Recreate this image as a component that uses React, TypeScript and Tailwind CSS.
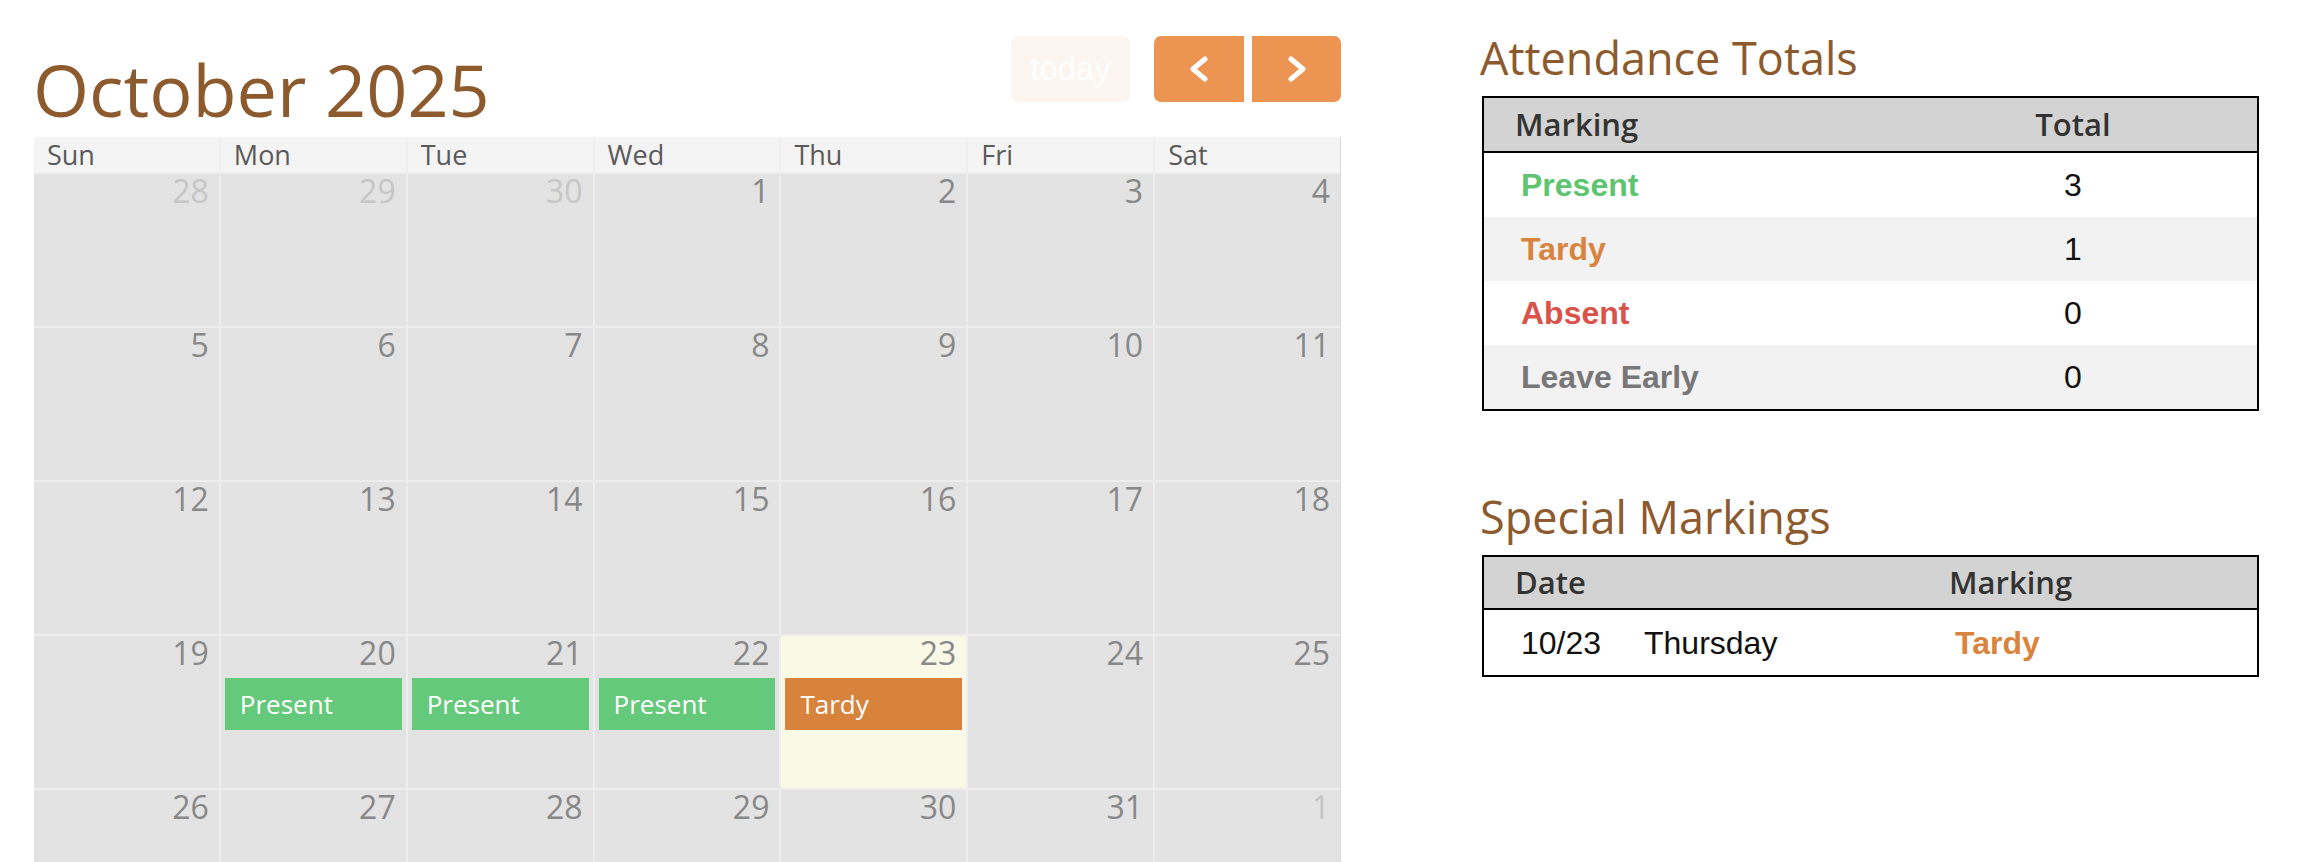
import React from 'react';

type Day = { n: number; other?: boolean; today?: boolean; event?: 'Present' | 'Tardy' };

const weeks: Day[][] = [
    [{ n: 28, other: true }, { n: 29, other: true }, { n: 30, other: true }, { n: 1 }, { n: 2 }, { n: 3 }, { n: 4 }],
    [{ n: 5 }, { n: 6 }, { n: 7 }, { n: 8 }, { n: 9 }, { n: 10 }, { n: 11 }],
    [{ n: 12 }, { n: 13 }, { n: 14 }, { n: 15 }, { n: 16 }, { n: 17 }, { n: 18 }],
    [
        { n: 19 },
        { n: 20, event: 'Present' },
        { n: 21, event: 'Present' },
        { n: 22, event: 'Present' },
        { n: 23, today: true, event: 'Tardy' },
        { n: 24 },
        { n: 25 },
    ],
    [{ n: 26 }, { n: 27 }, { n: 28 }, { n: 29 }, { n: 30 }, { n: 31 }, { n: 1, other: true }],
];

const dayNames = ['Sun', 'Mon', 'Tue', 'Wed', 'Thu', 'Fri', 'Sat'];

const totals = [
    { label: 'Present', color: 'text-[#5ec46f]', total: 3 },
    { label: 'Tardy', color: 'text-[#d9843e]', total: 1 },
    { label: 'Absent', color: 'text-[#d9534a]', total: 0 },
    { label: 'Leave Early', color: 'text-[#777777]', total: 0 },
];

function Chevron({ dir }: { dir: 'left' | 'right' }) {
    return (
        <svg width="20" height="26" viewBox="0 0 20 26" fill="none">
            <path
                d={dir === 'left' ? 'M16 3 L4 13 L16 23' : 'M4 3 L16 13 L4 23'}
                stroke="white"
                strokeWidth="5"
                strokeLinecap="round"
                strokeLinejoin="round"
            />
        </svg>
    );
}

function Calendar() {
    return (
        <div className="w-[1307px] shrink-0">
            {/* toolbar */}
            <div className="flex justify-between items-start h-[101px]">
                <h2 className="font-['Open_Sans',sans-serif] text-[72px] leading-none text-[#8d5a2e] mt-[17px] ml-[-1px]">
                    October 2025
                </h2>
                <div className="flex">
                    <button className="w-[119px] h-[66px] rounded-[7px] bg-[#fdf5ef] text-white font-['Liberation_Sans',sans-serif] text-[33px] mr-[24px]">
                        today
                    </button>
                    <button className="w-[90px] h-[66px] rounded-l-[7px] bg-[#ec9552] flex items-center justify-center mr-[8px]">
                        <Chevron dir="left" />
                    </button>
                    <button className="w-[89px] h-[66px] rounded-r-[7px] bg-[#ec9552] flex items-center justify-center">
                        <Chevron dir="right" />
                    </button>
                </div>
            </div>

            {/* grid */}
            <div className="bg-[#eeeeee] border-r border-[#d9d9d9] font-['Open_Sans',sans-serif]">
                <div className="grid grid-cols-7 gap-x-[2px] h-[35px]">
                    {dayNames.map(d => (
                        <div key={d} className="bg-[#f4f4f4] pl-[13px] text-[27px] leading-[35px] text-[#5a5a5a]">
                            {d}
                        </div>
                    ))}
                </div>
                {weeks.map((week, i) => (
                    <div key={i} className="grid grid-cols-7 gap-x-[2px] h-[154px] pt-[2px]">
                        {week.map((day, j) => (
                            <div key={j} className={day.today ? 'bg-[#faf8e7]' : 'bg-[#e3e3e3]'}>
                                <div
                                    className={`text-right pr-[10px] pt-[1px] text-[32px] leading-[32px] ${day.other ? 'text-[#c6c6c6]' : 'text-[#888888]'}`}
                                >
                                    {day.n}
                                </div>
                                {day.event && (
                                    <div
                                        className={`mx-[4px] mt-[9px] h-[52px] flex items-center pl-[15px] text-[26px] text-white ${day.event === 'Tardy' ? 'bg-[#d8833b]' : 'bg-[#64c97a]'}`}
                                    >
                                        {day.event}
                                    </div>
                                )}
                            </div>
                        ))}
                    </div>
                ))}
            </div>
        </div>
    );
}

function SectionTitle({ children }: { children: React.ReactNode }) {
    return (
        <h3 className="font-['Open_Sans',sans-serif] text-[45px] leading-none text-[#8d5a2e] ml-[-2px]">{children}</h3>
    );
}

export default function App() {
    return (
        <div className="h-[862px] overflow-hidden bg-white flex pl-[34px] pt-[36px]">
            <Calendar />

            <div className="ml-[141px] w-[777px] shrink-0">
                <div className="mt-[-1px]">
                    <SectionTitle>Attendance Totals</SectionTitle>
                </div>
                <div className="mt-[16px] border-2 border-black font-['Liberation_Sans',sans-serif] text-[32px]">
                    <div className="flex h-[55px] bg-[#d3d3d3] border-b-2 border-black items-center font-['Open_Sans',sans-serif] font-semibold text-[31px] text-[#333333]">
                        <div className="w-[405px] pl-[31px]">Marking</div>
                        <div className="flex-1 text-center">Total</div>
                    </div>
                    {totals.map((t, i) => (
                        <div key={t.label} className={`flex items-center h-[64px] ${i % 2 === 1 ? 'bg-[#f2f2f2]' : 'bg-white'}`}>
                            <div className={`w-[405px] pl-[37px] font-bold ${t.color}`}>{t.label}</div>
                            <div className="flex-1 text-center text-[#111111]">{t.total}</div>
                        </div>
                    ))}
                </div>

                <div className="mt-[83px]">
                    <SectionTitle>Special Markings</SectionTitle>
                </div>
                <div className="mt-[16px] border-2 border-black font-['Liberation_Sans',sans-serif] text-[32px]">
                    <div className="flex h-[53px] bg-[#d3d3d3] border-b-2 border-black items-center font-['Open_Sans',sans-serif] font-semibold text-[31px] text-[#333333]">
                        <div className="w-[434px] pl-[31px]">Date</div>
                        <div className="flex-1 pl-[31px]">Marking</div>
                    </div>
                    <div className="flex items-center h-[65px] bg-white text-[#111111]">
                        <div className="w-[123px] pl-[37px]">10/23</div>
                        <div className="w-[311px] pl-[37px]">Thursday</div>
                        <div className="flex-1 pl-[37px] font-bold text-[#d9843e]">Tardy</div>
                    </div>
                </div>
            </div>
        </div>
    );
}
